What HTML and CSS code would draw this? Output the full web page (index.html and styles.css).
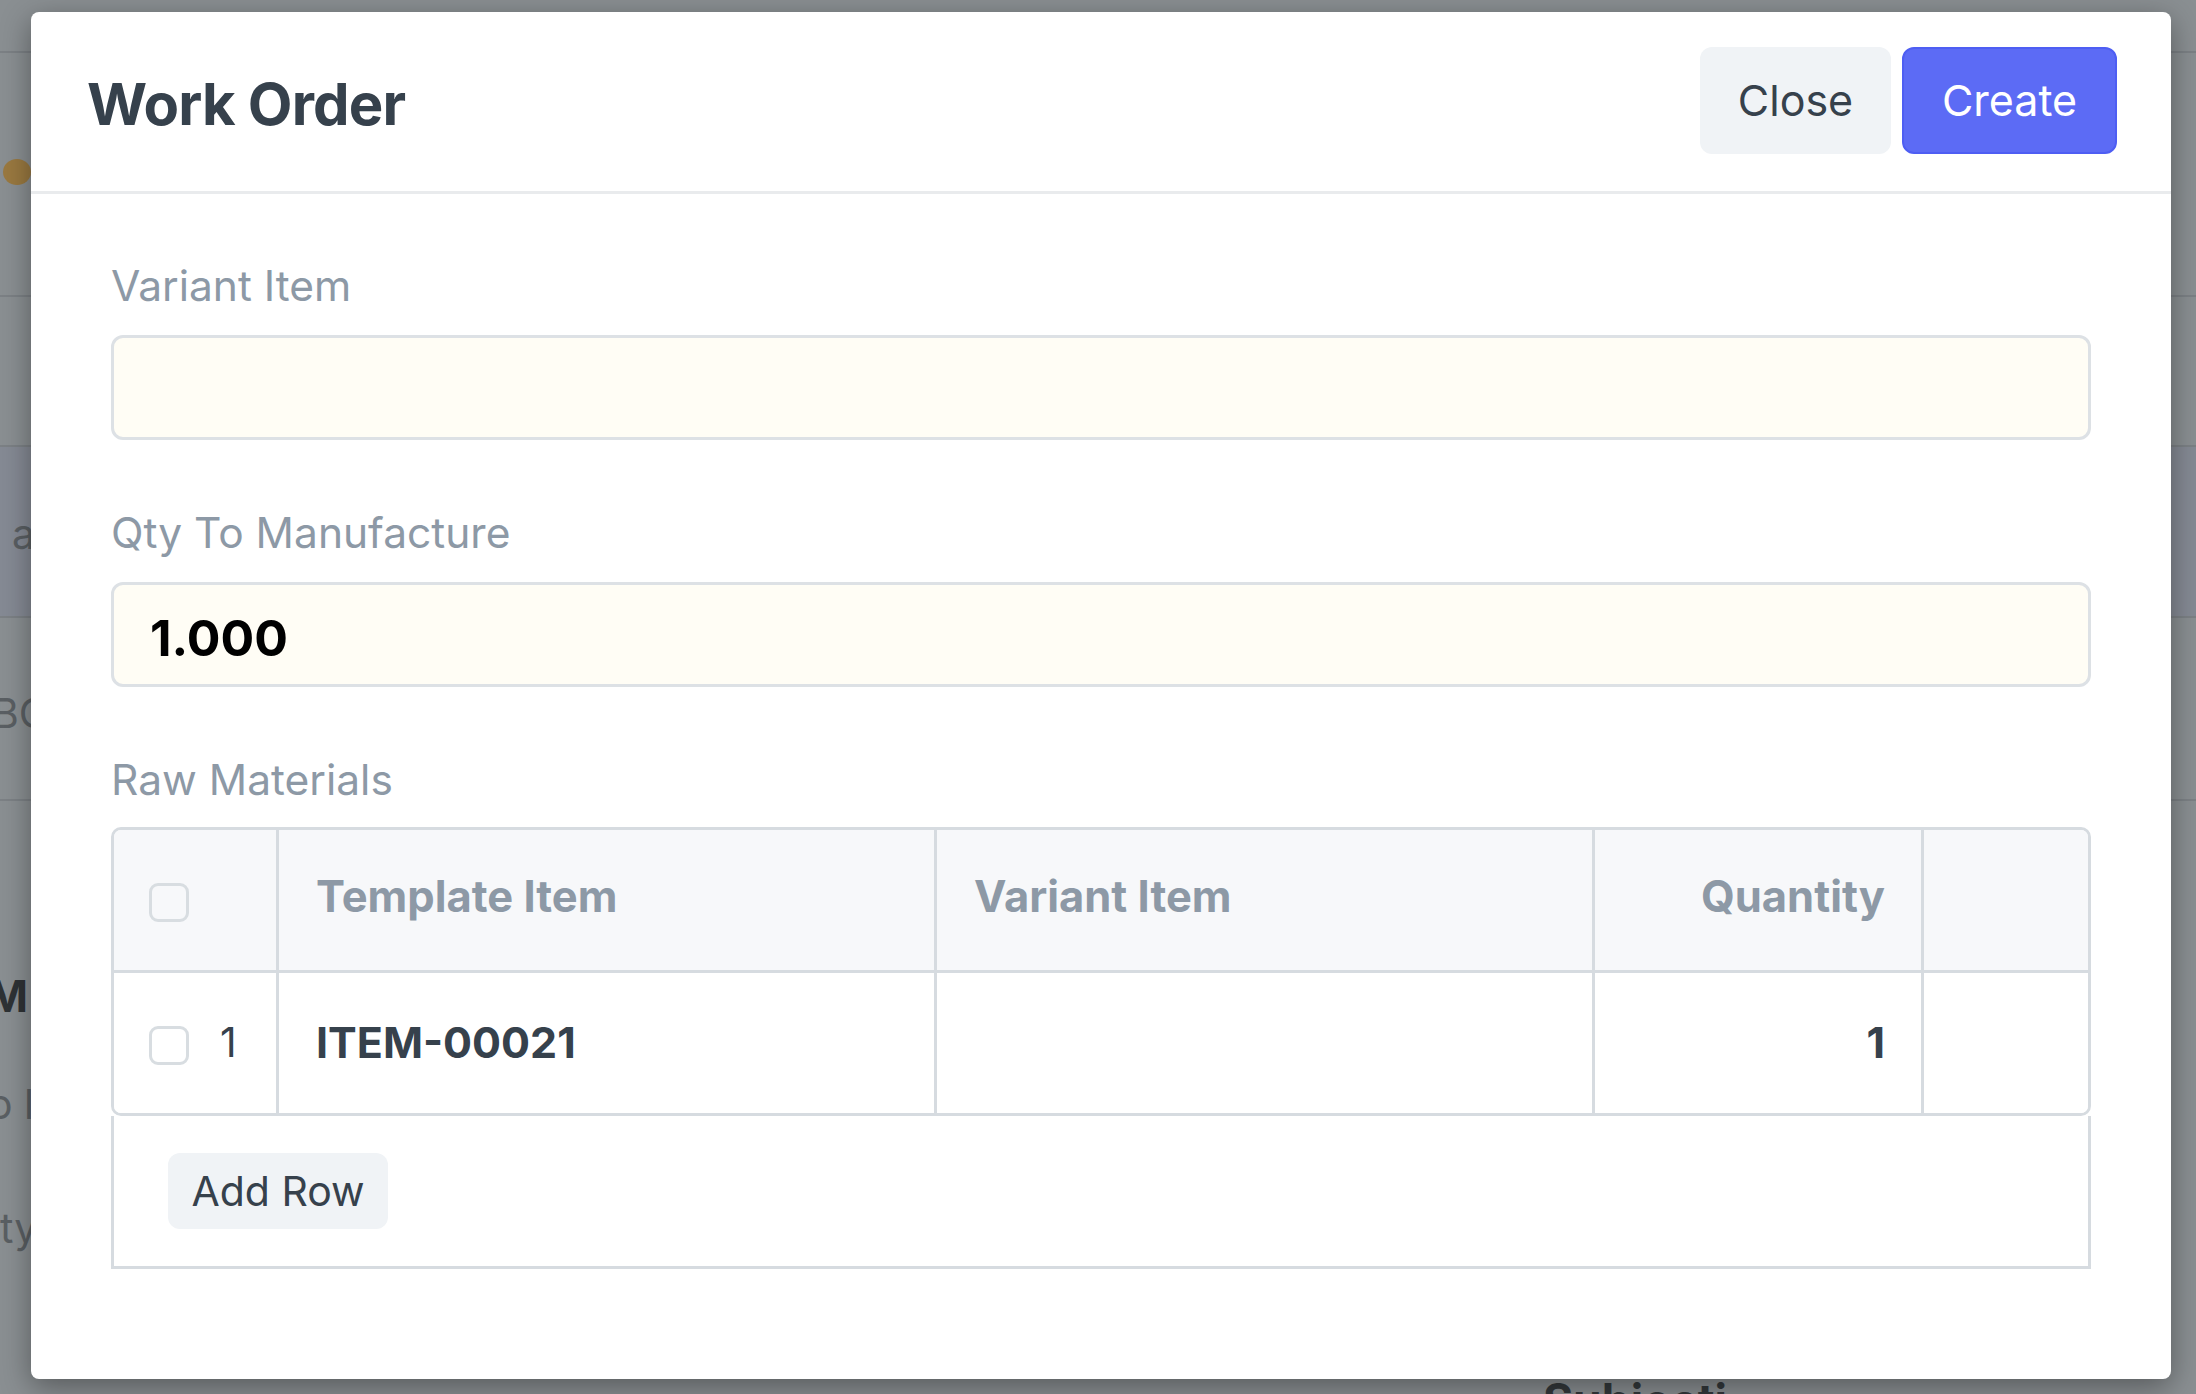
FILE: index.html
```html
<!DOCTYPE html>
<html lang="en">
<head>
<meta charset="utf-8">
<title>Work Order</title>
<link rel="stylesheet" href="styles.css">
</head>
<body>
<div class="backdrop-page">
  <div class="bg-row r1"></div>
  <div class="bg-row r2"><span class="dot"></span></div>
  <div class="bg-row r3"></div>
  <div class="bg-row r4"><span class="frag frag-a">a</span></div>
  <div class="bg-row r5"><span class="frag frag-bc">BC</span></div>
  <div class="bg-row r6">
    <span class="frag frag-m">M</span>
    <span class="frag frag-ol">o l</span>
    <span class="frag frag-ity">ity</span>
  </div>
  <div class="bg-row r7"><span class="frag frag-subject">Subjecti</span></div>
</div>

<div class="modal">
  <div class="modal-header">
    <h4 class="modal-title">Work Order</h4>
    <div class="modal-actions">
      <button class="btn btn-default">Close</button>
      <button class="btn btn-primary">Create</button>
    </div>
  </div>
  <div class="modal-body">
    <div class="field">
      <label class="control-label">Variant Item</label>
      <div class="control-input"></div>
    </div>
    <div class="field">
      <label class="control-label">Qty To Manufacture</label>
      <div class="control-input"><span class="control-value">1.000</span></div>
    </div>
    <div class="field field-table">
      <label class="control-label">Raw Materials</label>
      <div class="grid">
        <div class="grid-row grid-heading">
          <div class="cell cell-index"><span class="checkbox"></span></div>
          <div class="cell">Template Item</div>
          <div class="cell">Variant Item</div>
          <div class="cell cell-right">Quantity</div>
          <div class="cell"></div>
        </div>
        <div class="grid-row grid-data">
          <div class="cell cell-index"><span class="checkbox checkbox-white"></span><span class="row-index">1</span></div>
          <div class="cell cell-bold">ITEM-00021</div>
          <div class="cell"></div>
          <div class="cell cell-right cell-bold">1</div>
          <div class="cell"></div>
        </div>
      </div>
      <div class="grid-footer">
        <button class="btn btn-add">Add Row</button>
      </div>
    </div>
  </div>
</div>
</body>
</html>
```

FILE: styles.css
```css
* {
  box-sizing: border-box;
  margin: 0;
  padding: 0;
}

html, body {
  width: 2196px;
  height: 1394px;
  overflow: hidden;
}

body {
  position: relative;
  font-family: Inter, "Noto Sans", sans-serif;
  background: #8a8f92;
  color: #36414c;
}

/* ---------- dimmed page behind the dialog ---------- */
.backdrop-page {
  display: flex;
  flex-direction: column;
  height: 1394px;
}

.bg-row {
  border-bottom: 2px solid #7c8185;
  flex: none;
}

.r1 { height: 53px; }
.r2 { height: 244px; padding-top: 106px; }
.r3 { height: 150px; }
.r4 { height: 171px; background: #858a94; padding-top: 62px; }
.r5 { height: 183px; padding-top: 70px; }
.r6 {
  height: 570px;
  border-bottom: none;
  display: flex;
  flex-direction: column;
  padding-top: 170px;
}
.r7 {
  flex: 1;
  border-bottom: none;
  padding-left: 1543px;
  padding-top: 4px;
}

.dot {
  display: block;
  width: 28px;
  height: 26px;
  border-radius: 50%;
  background: #9a7940;
  margin-left: 3px;
}

.frag {
  display: block;
  font-size: 41px;
  line-height: 50px;
  color: #5a5f63;
  white-space: nowrap;
}

.frag-a { margin-left: 12px; }
.frag-bc { margin-left: -8px; }
.frag-m {
  margin-left: -13px;
  font-weight: 700;
  font-size: 44px;
  color: #2e3235;
}
.frag-ol { margin-left: -12px; margin-top: 58px; }
.frag-ity { margin-left: -10px; margin-top: 74px; }
.frag-subject {
  font-weight: 700;
  font-size: 46px;
  color: #33383b;
  line-height: 50px;
}

/* ---------- dialog ---------- */
.modal {
  position: absolute;
  top: 12px;
  left: 31px;
  width: 2140px;
  background: #ffffff;
  border-radius: 8px;
  box-shadow: 0 8px 30px rgba(0, 0, 0, 0.38);
  overflow: hidden;
}

.modal-header {
  height: 182px;
  display: flex;
  align-items: center;
  justify-content: space-between;
  padding: 0 54px 3px 56px;
  border-bottom: 3px solid #e9ebed;
}

.modal-title {
  font-size: 58px;
  font-weight: 700;
  letter-spacing: -0.8px;
  color: #36414c;
  margin-top: 8px;
}

.modal-actions {
  display: flex;
  gap: 11px;
}

.btn {
  font-family: Inter, "Noto Sans", sans-serif;
  font-size: 43px;
  font-weight: 400;
  height: 107px;
  padding: 0;
  border-radius: 12px;
  border: none;
  cursor: pointer;
  white-space: nowrap;
}

.btn-default {
  background: #f0f3f6;
  color: #36414c;
  width: 191px;
}

.btn-primary {
  background: #5c6bf5;
  border: 2px solid #4e5ef3;
  color: #ffffff;
  width: 215px;
}

.modal-body {
  padding: 67px 80px 110px;
}

.field {
  margin-bottom: 68px;
}

.field-table {
  margin-bottom: 0;
}

.control-label {
  display: block;
  font-size: 42.5px;
  line-height: 50px;
  color: #8d99a6;
  margin-bottom: 24px;
}

.field-table .control-label {
  margin-bottom: 22px;
}

.control-input {
  height: 105px;
  background: #fffdf5;
  border: 3px solid #dde1e5;
  border-radius: 12px;
  display: flex;
  align-items: center;
  padding-left: 36px;
}

.control-value {
  font-size: 50px;
  font-weight: 700;
  color: #000000;
  margin-top: 7px;
}

/* ---------- grid ---------- */
.grid {
  border: 3px solid #d6dbe0;
  border-radius: 10px;
  overflow: hidden;
}

.grid-row {
  display: grid;
  grid-template-columns: 162px 658px 658px 329px 1fr;
}

.grid-heading {
  background: #f7f8fa;
  border-bottom: 3px solid #d6dbe0;
  height: 143px;
}

.grid-data {
  height: 140px;
  background: #ffffff;
}

.cell {
  display: flex;
  align-items: center;
  padding: 0 36px 0 37px;
  border-left: 3px solid #d6dbe0;
  font-size: 43.5px;
  font-weight: 700;
  color: #8d99a6;
  white-space: nowrap;
}

.grid-heading .cell {
  padding-bottom: 8px;
}

.grid-data .cell {
  font-size: 43px;
  color: #36414c;
  padding-bottom: 3px;
}

.cell-index {
  border-left: none;
  gap: 31px;
}

.grid-heading .cell-index,
.grid-data .cell-index {
  padding: 0 0 0 35px;
}

.cell-right {
  justify-content: flex-end;
}

.cell-bold {
  font-weight: 700;
}

.checkbox {
  display: block;
  width: 40px;
  height: 39px;
  border: 3px solid #d8dde1;
  border-radius: 9px;
  margin-top: 4px;
}

.checkbox-white {
  background: #ffffff;
}

.row-index {
  font-weight: 400;
  color: #36414c;
  font-size: 41px;
  margin-top: -3px;
}

.grid-footer {
  border: 3px solid #d6dbe0;
  border-top: none;
  padding: 37px 0 37px 54px;
}

.btn-add {
  height: 76px;
  width: 220px;
  font-size: 41px;
  background: #f0f3f6;
  color: #36414c;
  border-radius: 12px;
}
```
